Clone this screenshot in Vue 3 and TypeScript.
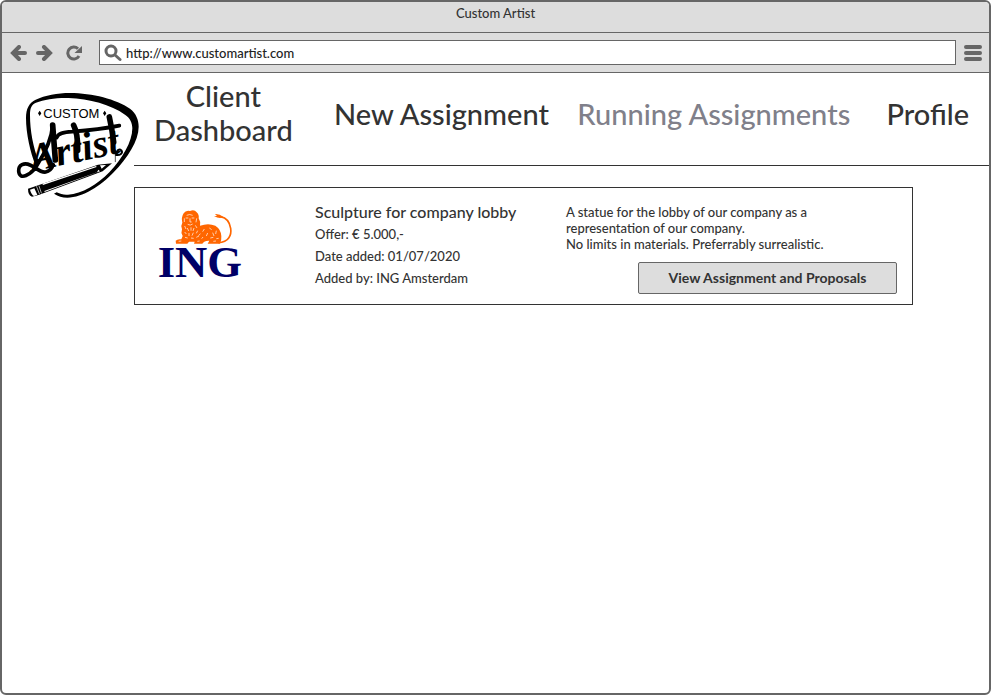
<script setup lang="ts">
import { ref } from 'vue'

interface NavItem {
  label: string
  current: boolean
}

interface Assignment {
  title: string
  facts: string[]
  description: string[]
}

const address = ref('http://www.customartist.com')

const navItems: NavItem[] = [
  { label: 'Client Dashboard', current: false },
  { label: 'New Assignment', current: false },
  { label: 'Running Assignments', current: true },
  { label: 'Profile', current: false },
]

const assignments: Assignment[] = [
  {
    title: 'Sculpture for company lobby',
    facts: ['Offer: € 5.000,-', 'Date added: 01/07/2020', 'Added by: ING Amsterdam'],
    description: [
      'A statue for the lobby of our company as a representation of our company.',
      'No limits in materials. Preferrably surrealistic.',
    ],
  },
]
</script>

<template>
  <div class="window">
    <div class="titlebar">Custom Artist</div>
    <div class="toolbar">
      <button class="tool" type="button" aria-label="Back">
        <svg width="18" height="16" viewBox="0 0 18 16">
          <path d="M9 2 3 8l6 6M4 8h11" />
        </svg>
      </button>
      <button class="tool forward" type="button" aria-label="Forward">
        <svg width="18" height="16" viewBox="0 0 18 16">
          <path d="m9 2 6 6-6 6M14 8H3" />
        </svg>
      </button>
      <button class="tool reload" type="button" aria-label="Reload">
        <svg width="18" height="16" viewBox="0 0 18 16">
          <path class="arc" d="M13 3.700A6 6 0 1 0 14 11" />
          <path class="tip" d="M17 1v7h-7.500z" />
        </svg>
      </button>
      <label class="address">
        <svg width="18" height="18" viewBox="0 0 18 18" aria-hidden="true">
          <circle cx="7" cy="7" r="5" />
          <path d="m11 11 5 4.500" />
        </svg>
        <input v-model="address" type="text" aria-label="Address" />
      </label>
      <button class="tool menu" type="button" aria-label="Menu">
        <svg width="18" height="18" viewBox="0 0 18 18">
          <path d="M2 3h14M2 9h14M2 15h14" />
        </svg>
      </button>
    </div>

    <div class="page">
      <a class="brand" href="#" aria-label="Custom Artist">
        <svg width="140" height="120" viewBox="0 0 420 360">
          <path
            fill-rule="evenodd"
            d="M77 242C61 203 48 146 48 99c0-29 10-46 29-55 28-13 65-20 103-20 67 0 139 19 180 47 18 13 26 34 26 54 0 43-34 94-75 137-39 41-93 76-139 76-16 0-27-4-40-12l8-4c12 6 22 8 34 7 42-2 88-31 124-67 39-41 69-92 69-132 0-18-8-32-22-41-42-30-108-48-169-50-37-1-73 4-98 14-14 6-18 17-18 37 0 49 10 96 26 140z"
          />
          <text class="custom" x="100" y="98">CUSTOM</text>
          <path d="m89 77 5 8-5 8-5-8zM284 77l5 8-5 8-5-8z" />
          <text class="artist" transform="translate(66 260) rotate(-12)">Artist</text>
          <path class="swash" d="M128 120c-3 42-22 82-47 121-17 28-53 48-55 17-1-19 17-26 34-18 16 7 31 24 47 21 12-2 18-9 23-22" />
          <path class="stem" d="M128 120l8 105M191 121q13 24 12 75M298 96q8 36 13 75" />
          <path class="bar" d="M140 158c4-13 19-17 46-18q82-6 142-18" />
          <path class="curl" d="M318 210c12 2 22-6 16-14-6-6-14 0-11 6" />
          <path class="pencil" d="m54 311 210-72 42-4-28 24-190 70-22 6q-12-4-12-24z" />
          <path class="paper" d="m60 314 13-4 9 19-10 4q-8-4-12-19zM97 296l161-53 2 3-161 54zM103 318l158-56 4-8 5 5-166 62zM270 241l18-1-13 11z" />
          <path class="thin" d="M316 208v22" />
          <path class="ridge" d="m80 305 8 21M87 303l7 21" />
        </svg>
      </a>

      <div class="content">
        <nav class="nav">
          <a
            v-for="item in navItems"
            :key="item.label"
            href="#"
            :class="{ current: item.current }"
            :aria-current="item.current ? 'page' : undefined"
          >{{ item.label }}</a>
        </nav>

        <main>
          <article v-for="job in assignments" :key="job.title" class="card">
            <svg class="client" width="110" height="90" viewBox="0 0 330 270" role="img" aria-label="ING">
              <path
                class="lion"
                d="M116 40Q122 30 135 33Q148 27 155 37Q163 44 161 55Q168 66 165 77Q190 68 211 77Q228 88 229 108Q230 122 225 131H188L193 122Q178 121 172 131H147L149 125H132L127 131H93L92 122Q98 116 109 118L113 108Q107 98 111 88Q106 78 112 68Q108 52 116 40Z"
              />
              <path class="tail" d="M220 128c32-1 40-24 37-43-3-20-16-32-30-35" />
              <path class="lion" d="M235 51Q224 58 207 48L216 48L210 42Q224 41 235 51Z" />
              <path class="fur" d="M125 46q9-5 18 0M122 54h8M140 54h8M135 55v11h5M128 73q8 5 15-1M118 55v11M155 55l-2 12M119 78l4 9M151 76l5 8M127 84l4 9M138 82v10M147 84l-3 9M119 96l5 6M132 99v9M145 98l-4 9M158 92l-4 8M166 101l-5 6M120 112l8 2M138 114l8 1M154 112l8-4M178 87l-5 8M193 84l7 5M188 99l-4 9M203 98l4 10M214 92l-2 10M174 111l-4 5M196 114l9-2M214 116l7-1M101 124l8-1M157 124l7-1M205 124l8-1" />
              <text x="38" y="232">ING</text>
            </svg>
            <div class="info">
              <h2>{{ job.title }}</h2>
              <p v-for="fact in job.facts" :key="fact">{{ fact }}</p>
            </div>
            <div class="details">
              <p v-for="line in job.description" :key="line">{{ line }}</p>
              <button type="button">View Assignment and Proposals</button>
            </div>
          </article>
        </main>
      </div>
    </div>
  </div>
</template>

<style>
body {
  margin: 0;
  background: #fff;
}
</style>

<style scoped>
.window {
  box-sizing: border-box;
  min-height: 100vh;
  border: 2px solid #666;
  border-radius: 6px;
  overflow: hidden;
  background: #fff;
  color: #333;
  font-family: Lato, "Open Sans", sans-serif;
  font-size: 13px;
  font-weight: 500;
}

.titlebar {
  height: 30px;
  border-bottom: 1px solid #666;
  background: #ddd;
  line-height: 22px;
  text-align: center;
}

.toolbar {
  display: flex;
  align-items: center;
  height: 39px;
  padding: 0 7px 0 8px;
  border-bottom: 1px solid #666;
  background: #ddd;
}

.tool {
  display: flex;
  padding: 0;
  border: 0;
  background: none;
}

.tool svg {
  fill: none;
  stroke: #666;
  stroke-width: 4;
  stroke-linecap: round;
}

.forward {
  margin-left: 7px;
}

.reload {
  margin-left: 12px;
}

.tool .arc {
  stroke-width: 3;
  stroke-linecap: butt;
}

.tool .tip {
  fill: #666;
  stroke: none;
}

.address {
  box-sizing: border-box;
  display: flex;
  flex: 1;
  align-items: center;
  gap: 4px;
  height: 25px;
  margin: 0 8px 0 16px;
  padding-left: 4px;
  border: 1px solid #666;
  background: #fff;
}

.address svg {
  fill: none;
  stroke: #666;
  stroke-width: 3;
  stroke-linecap: round;
}

.address input {
  flex: 1;
  min-width: 0;
  padding: 0;
  border: 0;
  outline: 0;
  background: none;
  color: #222;
  font: inherit;
}

.page {
  display: grid;
  grid-template-columns: 132px minmax(0, 1fr);
}

.brand {
  height: 120px;
  padding: 12px 0 0 8px;
  color: #000;
}

.brand svg {
  display: block;
}

.custom {
  font: 39px "Liberation Sans", sans-serif;
}

.artist {
  font: italic bold 120px "Liberation Serif", serif;
}

.swash,
.stem,
.bar,
.curl,
.thin,
.ridge {
  fill: none;
  stroke: #000;
  stroke-width: 11;
  stroke-linecap: round;
}

.stem {
  stroke-width: 17;
}

.curl {
  stroke-width: 6;
}

.thin {
  stroke-width: 2;
}

.ridge {
  stroke: #fff;
  stroke-width: 2;
}

.pencil {
  stroke: #fff;
  stroke-width: 5;
  paint-order: stroke;
}

.paper {
  fill: #fff;
}

.nav {
  display: grid;
  grid-template-columns: 178fr 258fr 287fr 132fr;
  align-items: center;
  height: 92px;
  border-bottom: 1px solid #333;
  font-size: 29px;
  line-height: 34px;
  text-align: center;
}

.nav a {
  padding-bottom: 10px;
  color: #333;
  text-decoration: none;
}

.nav a.current {
  color: #80808a;
}

.nav a:first-child {
  padding: 0 20px 12px;
}

.nav a:last-child {
  padding-right: 20px;
  text-align: right;
}

.card {
  display: grid;
  grid-template-columns: 180px 251px minmax(0, 1fr);
  margin: 21px 76px 0 0;
  border: 1px solid #333;
}

.client {
  margin: 12px 0 0 10px;
}

.client .lion {
  fill: #f60;
}

.client .tail,
.client .fur {
  fill: none;
  stroke: #f60;
  stroke-width: 5;
}

.client .fur {
  stroke: #fff;
  stroke-width: 2;
}

.client text {
  fill: #006;
  font: bold 134px "Liberation Serif", serif;
}

.info {
  padding-top: 13px;
  line-height: 22px;
}

.info h2,
.info p,
.details p {
  margin: 0;
}

.info h2 {
  font-size: 16px;
  font-weight: 500;
}

.details {
  display: flex;
  flex-direction: column;
  padding: 16px 15px 10px 0;
  line-height: 16px;
}

.details p {
  max-width: 280px;
}

.details button {
  align-self: flex-end;
  width: 259px;
  height: 32px;
  margin-top: 10px;
  padding: 0;
  border: 1px solid #666;
  border-radius: 2px;
  background: #ddd;
  color: #333;
  font: inherit;
  font-size: 14px;
  font-weight: 700;
}
</style>
